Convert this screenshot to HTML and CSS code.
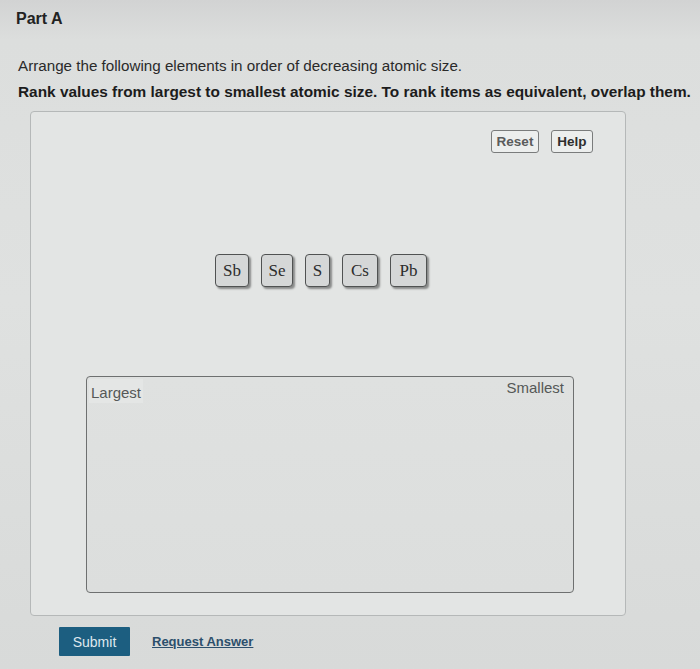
FILE: index.html
```html
<!DOCTYPE html>
<html>
<head>
<meta charset="utf-8">
<link rel="stylesheet" href="styles.css">
</head>
<body>
<div class="page">
  <div class="header">Part A</div>
  <div class="question">
    <p class="prompt">Arrange the following elements in order of decreasing atomic size.</p>
    <p class="instr">Rank values from largest to smallest atomic size. To rank items as equivalent, overlap them.</p>
  </div>
  <div class="panel">
    <div class="toolbar">
      <button class="tool reset">Reset</button>
      <button class="tool help">Help</button>
    </div>
    <div class="tiles">
      <div class="tile w34">Sb</div>
      <div class="tile w32">Se</div>
      <div class="tile w25">S</div>
      <div class="tile w36">Cs</div>
      <div class="tile w37">Pb</div>
    </div>
    <div class="rankbox">
      <div class="labels">
        <span class="largest">Largest</span>
        <span class="smallest">Smallest</span>
      </div>
    </div>
  </div>
  <div class="actions">
    <button class="submit">Submit</button>
    <a class="request" href="#">Request Answer</a>
  </div>
</div>
</body>
</html>
```
FILE: styles.css
```css
html, body {
  margin: 0;
  padding: 0;
}
body {
  background: linear-gradient(180deg, #d2d3d3 0px, #dcdedd 40px, #dfe1e0 300px, #d8dad9 669px);
  font-family: "Liberation Sans", Arial, sans-serif;
  color: #1e1e1e;
  width: 700px;
  height: 669px;
  overflow: hidden;
}
.page {
  padding-top: 9px;
}
.header {
  padding-left: 16px;
  font-size: 16px;
  font-weight: bold;
  line-height: 20px;
  color: #222;
  height: 37px;
}
.question {
  padding-left: 18px;
}
.prompt {
  margin: 0;
  font-size: 15.2px;
  line-height: 18px;
  padding-top: 11px;
  color: #2a2a2a;
}
.instr {
  margin: 0;
  padding-top: 8px;
  font-size: 15.4px;
  font-weight: bold;
  line-height: 18px;
  color: #1c1c1c;
}
.panel {
  margin: 10px 0 0 30px;
  width: 594px;
  height: 503px;
  border: 1px solid #b5b8b8;
  border-radius: 4px;
  background: #e3e5e4;
  display: flex;
  flex-direction: column;
}
.toolbar {
  display: flex;
  justify-content: flex-end;
  gap: 12px;
  padding: 18px 32px 0 0;
}
.tool {
  font-family: "Liberation Sans", Arial, sans-serif;
  font-size: 13.5px;
  font-weight: bold;
  height: 23px;
  padding: 0 4px;
  border: 1.5px solid #7a7c7c;
  border-radius: 3px;
  background: #eceeed;
}
.reset { color: #5a5c5c; width: 48px; }
.help { color: #2e2e2e; width: 42px; }
.tiles {
  display: flex;
  padding: 101px 0 0 184px;
  gap: 12px;
}
.tile {
  height: 33px;
  border: 1px solid #505252;
  border-radius: 4px;
  background: #d5d7d7;
  box-shadow: 2px 2px 2px rgba(0, 0, 0, 0.4);
  font-family: "Liberation Serif", "Times New Roman", serif;
  font-size: 17px;
  color: #2c2c2c;
  display: flex;
  align-items: center;
  justify-content: center;
  box-sizing: border-box;
}
.w34 { width: 34px; }
.w32 { width: 32px; }
.w25 { width: 25px; }
.w36 { width: 36px; }
.w37 { width: 37px; }
.rankbox {
  margin: 89px 0 0 55px;
  width: 488px;
  height: 217px;
  border: 1.5px solid #6e7070;
  border-radius: 4px;
  background: linear-gradient(180deg, #dfe1e0 0%, #dcdedd 100%);
  box-sizing: border-box;
}
.labels {
  display: flex;
  justify-content: space-between;
  padding: 2px 9px 0 2px;
  font-size: 15px;
  color: #555857;
}
.largest {
  padding: 5px 2px 2px 2px;
  background: #e4e6e5;
}
.smallest {
  padding-top: 0;
}
.actions {
  display: flex;
  align-items: center;
  gap: 22px;
  padding: 11px 0 0 59px;
}
.submit {
  width: 71px;
  height: 29px;
  background: #1c5e80;
  color: #dfe8ee;
  border: none;
  border-radius: 1px;
  font-family: "Liberation Sans", Arial, sans-serif;
  font-size: 14px;
}
.request {
  font-size: 13px;
  font-weight: bold;
  color: #2c4f6c;
  text-decoration: underline;
}
```
